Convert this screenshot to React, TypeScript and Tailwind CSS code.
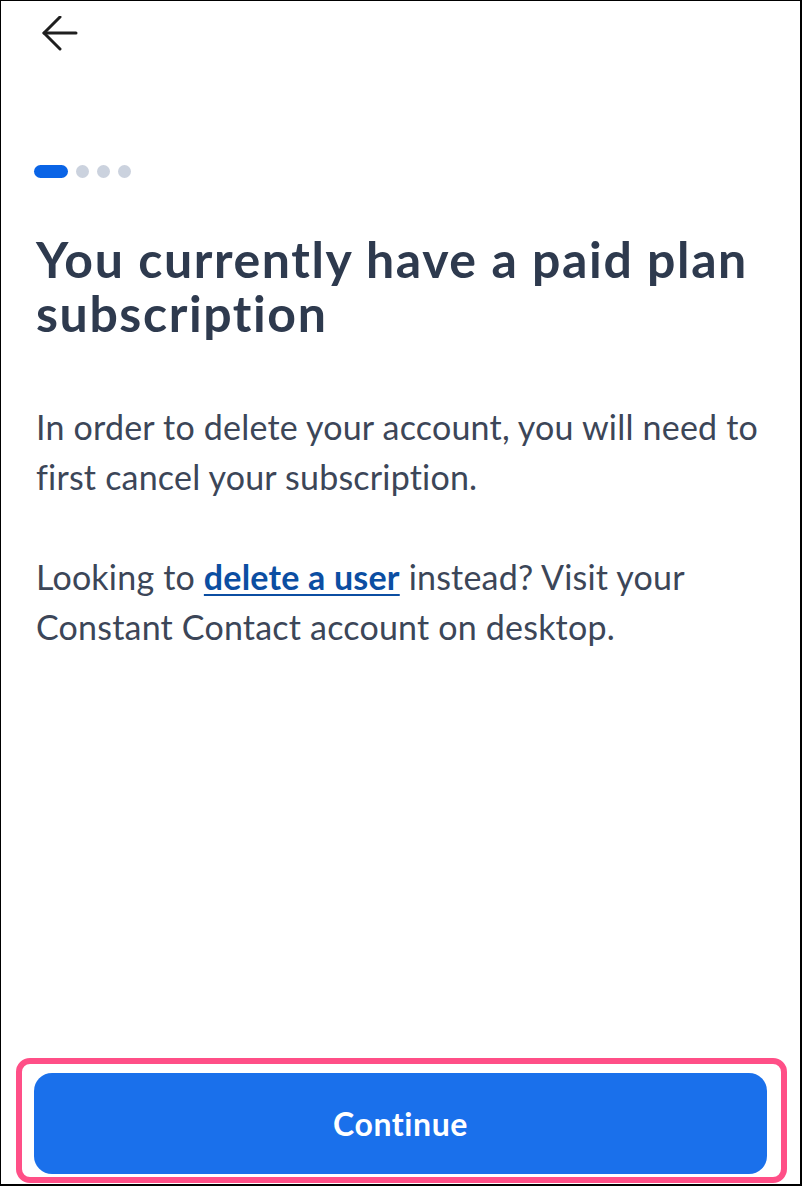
export default function App() {
  return (
    <div className="relative w-[802px] h-[1186px] bg-white border-l border-t border-r-2 border-b-2 border-black flex flex-col font-['Lato',sans-serif]">
      <div className="pl-[41px] pt-[15px] h-[164px]">
        <svg width="36" height="36" viewBox="0 0 36 36" fill="none" stroke="#1f1f1f" strokeWidth="3" strokeLinecap="round" strokeLinejoin="round">
          <path d="M34 17H2" />
          <path d="M18 1L2 17l16 16" />
        </svg>
      </div>
      <div className="pl-[33px] flex items-center gap-[8px] h-[13px]">
        <div className="w-[34px] h-[13px] rounded-full bg-[#0a64e6]" />
        <div className="w-[13px] h-[13px] rounded-full bg-[#cbd2de]" />
        <div className="w-[13px] h-[13px] rounded-full bg-[#cbd2de]" />
        <div className="w-[13px] h-[13px] rounded-full bg-[#cbd2de]" />
      </div>
      <div className="pl-[35px] pr-[24px] pt-[54px]">
        <h1 className="text-[50px] leading-[54px] font-bold text-[#2e3a4e] tracking-[1.6px]">
          You currently have a paid plan subscription
        </h1>
        <p className="mt-[62px] text-[34px] leading-[50px] text-[#3c4658] tracking-[0.2px]">
          In order to delete your account, you will need to first cancel your subscription.
        </p>
        <p className="mt-[50px] text-[34px] leading-[50px] text-[#3c4658] tracking-[0.2px]">
          Looking to <a className="font-bold text-[#0b4ea2] underline underline-offset-[4px] decoration-[2px]" href="#">delete a user</a> instead? Visit your Constant Contact account on desktop.
        </p>
      </div>
      <div className="flex-1" />
      <div className="pl-[33px] pr-[33px] pb-[10px]">
        <button className="w-[733px] h-[101px] rounded-[18px] bg-[#1a70eb] text-white text-[32px] font-bold tracking-[0.6px]">
          Continue
        </button>
      </div>
      <div className="absolute left-[15px] top-[1057px] w-[771px] h-[125px] rounded-[14px] border-[6px] border-[#ff4f87] pointer-events-none" />
    </div>
  );
}
